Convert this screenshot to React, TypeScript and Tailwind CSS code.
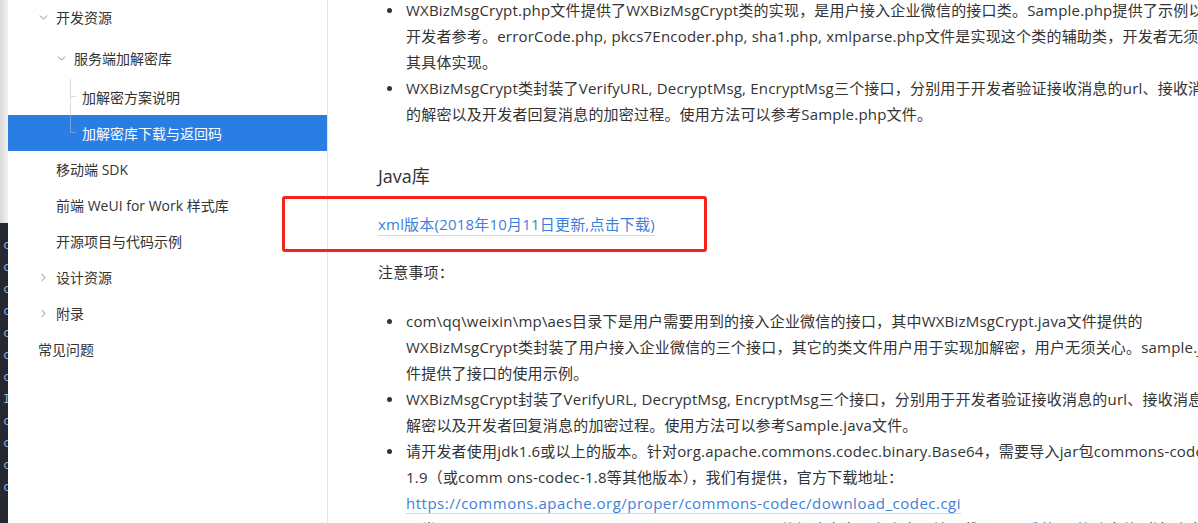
import React from "react";
import { ChevronDown, ChevronRight } from "lucide-react";

const font = { fontFamily: '"Open Sans", "Noto Sans CJK SC", sans-serif' };

type NavItem = {
  label: string;
  row: string;
  chevron?: "down" | "right";
  active?: boolean;
  tree?: "mid" | "end";
};

// row classes: height + left padding (sidebar starts at x=8)
const nav: NavItem[] = [
  { label: "开发资源", row: "h-[40px] pl-[29px]", chevron: "down" },
  { label: "服务端加解密库", row: "h-[42px] pl-[47px]", chevron: "down" },
  { label: "加解密方案说明", row: "h-[36px] pl-[62px]", tree: "mid" },
  { label: "加解密库下载与返回码", row: "h-[36px] pl-[62px]", tree: "end", active: true },
  { label: "移动端 SDK", row: "h-[36px] pl-[48px]" },
  { label: "前端 WeUI for Work 样式库", row: "h-[36px] pl-[48px]" },
  { label: "开源项目与代码示例", row: "h-[36px] pl-[48px]" },
  { label: "设计资源", row: "h-[36px] pl-[29px]", chevron: "right" },
  { label: "附录", row: "h-[36px] pl-[29px]", chevron: "right" },
  { label: "常见问题", row: "h-[36px] pl-[30px]" },
];

const codeRows = [0, 1, 2, 3, 4, 5, 6, 7, 8, 9, 10, 11];

function EditorStrip() {
  return (
    <div className="w-[8px] shrink-0 flex flex-col h-full">
      <div className="h-[223px] bg-gradient-to-r from-[#d9d9d9] to-[#f2f2f2]" />
      <div className="flex-1 bg-[#252830] pt-[11px] flex flex-col font-['DejaVu_Sans_Mono',monospace] text-[12px] leading-[22px] text-[#8fb1d6] overflow-hidden">
        {codeRows.map((i) => (
          <span key={i} className="pl-[3px]">{i === 7 ? "I" : "c"}</span>
        ))}
      </div>
    </div>
  );
}

function TreeMark({ end, active }: { end: boolean; active: boolean }) {
  const line = active ? "border-[#6aa3ec]" : "border-[#dcdcdc]";
  return (
    <span className="self-stretch w-[12px] flex flex-col shrink-0">
      <span className={`h-1/2 w-[6px] border-l border-b ${line}`} />
      <span className={`h-1/2 w-[6px] ${end ? "" : `border-l ${line}`}`} />
    </span>
  );
}

function Sidebar() {
  return (
    <div className="w-[320px] shrink-0 h-full border-r border-[#e4e4e4] bg-white overflow-hidden">
      <div className="-mt-[3px] flex flex-col">
        {nav.map((item) => (
          <div
            key={item.label}
            className={`flex items-center text-[14px] whitespace-nowrap ${item.row} ${
              item.active ? "bg-[#2a7de3] text-white" : "text-[#333333]"
            }`}
          >
            {item.chevron === "down" && (
              <ChevronDown size={13} strokeWidth={1.6} className="text-[#777777] mr-[6px] shrink-0" />
            )}
            {item.chevron === "right" && (
              <ChevronRight size={13} strokeWidth={1.6} className="text-[#777777] mr-[6px] shrink-0" />
            )}
            {item.tree && <TreeMark end={item.tree === "end"} active={!!item.active} />}
            <span>{item.label}</span>
          </div>
        ))}
      </div>
    </div>
  );
}

function Bullet({ lines }: { lines: React.ReactNode[] }) {
  return (
    <li className="flex">
      <span className="w-[28px] shrink-0 flex justify-center pt-[11px] pr-[5px]">
        <span className="w-[5px] h-[5px] rounded-full bg-[#333333]" />
      </span>
      <div className="flex flex-col">
        {lines.map((l, i) => (
          <div key={i} className="whitespace-nowrap">{l}</div>
        ))}
      </div>
    </li>
  );
}

function Content() {
  return (
    <div
      className="flex-1 h-full overflow-hidden bg-white text-[#333333] text-[15px] leading-[26px] tracking-[0.2px]"
      style={font}
    >
      <div className="pl-[50px] -mt-[3px] flex flex-col">
        <ul className="flex flex-col">
          <Bullet
            lines={[
              "WXBizMsgCrypt.php文件提供了WXBizMsgCrypt类的实现，是用户接入企业微信的接口类。Sample.php提供了示例以供",
              "开发者参考。errorCode.php, pkcs7Encoder.php, sha1.php, xmlparse.php文件是实现这个类的辅助类，开发者无须关心",
              "其具体实现。",
            ]}
          />
          <Bullet
            lines={[
              "WXBizMsgCrypt类封装了VerifyURL, DecryptMsg, EncryptMsg三个接口，分别用于开发者验证接收消息的url、接收消息",
              "的解密以及开发者回复消息的加密过程。使用方法可以参考Sample.php文件。",
            ]}
          />
        </ul>

        <h3 className="mt-[35px] text-[18px] leading-[28px] tracking-normal text-[#333333]">Java库</h3>

        <div className="mt-[21px]">
          <a className="text-[#3d7fd9] border-b border-[#c9dbf4] pb-px cursor-pointer">
            xml版本(2018年10月11日更新,点击下载)
          </a>
        </div>

        <p className="mt-[22px]">注意事项：</p>

        <ul className="mt-[23px] flex flex-col">
          <Bullet
            lines={[
              "com\\qq\\weixin\\mp\\aes目录下是用户需要用到的接入企业微信的接口，其中WXBizMsgCrypt.java文件提供的",
              "WXBizMsgCrypt类封装了用户接入企业微信的三个接口，其它的类文件用户用于实现加解密，用户无须关心。sample.java文",
              "件提供了接口的使用示例。",
            ]}
          />
          <Bullet
            lines={[
              "WXBizMsgCrypt封装了VerifyURL, DecryptMsg, EncryptMsg三个接口，分别用于开发者验证接收消息的url、接收消息",
              "解密以及开发者回复消息的加密过程。使用方法可以参考Sample.java文件。",
            ]}
          />
          <Bullet
            lines={[
              "请开发者使用jdk1.6或以上的版本。针对org.apache.commons.codec.binary.Base64，需要导入jar包commons-codec-",
              "1.9（或comm ons-codec-1.8等其他版本），我们有提供，官方下载地址：",
              <a className="text-[#3d7fd9] border-b border-[#c9dbf4] cursor-pointer tracking-[0.5px]">
                https://commons.apache.org/proper/commons-codec/download_codec.cgi
              </a>,
              "异常java.security.InvalidKeyException:illegal Key Size的解决方案：在官方网站下载JCE无限制权限策略文件（请到对应的",
            ]}
          />
        </ul>
      </div>
    </div>
  );
}

export default function App() {
  return (
    <div className="relative w-[1198px] h-[523px] overflow-hidden flex bg-white" style={font}>
      <EditorStrip />
      <Sidebar />
      <Content />
      {/* red annotation box drawn over the page */}
      <div className="absolute left-[282px] top-[196px] w-[425px] h-[56px] border-[3px] border-[#f5221b] rounded-[3px] pointer-events-none" />
    </div>
  );
}
